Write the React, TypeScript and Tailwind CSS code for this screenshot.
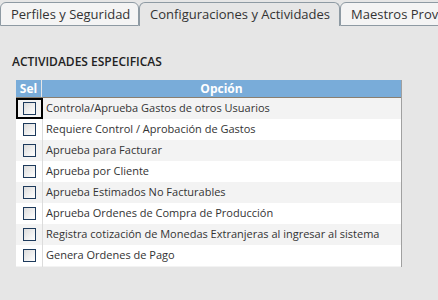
import React, { useState } from "react";

const opciones = [
  "Controla/Aprueba Gastos de otros Usuarios",
  "Requiere Control / Aprobación de Gastos",
  "Aprueba para Facturar",
  "Aprueba por Cliente",
  "Aprueba Estimados No Facturables",
  "Aprueba Ordenes de Compra de Producción",
  "Registra cotización de Monedas Extranjeras al ingresar al sistema",
  "Genera Ordenes de Pago",
  "Aprueba Ordenes de Pago",
];

const tabs = [
  { label: "Perfiles y Seguridad", w: "w-[139px]" },
  { label: "Configuraciones y Actividades", w: "w-[201px]" },
  { label: "Maestros Provisorios", w: "w-[150px]" },
];

export default function App() {
  const [active] = useState(1);
  const [checked, setChecked] = useState<boolean[]>(opciones.map(() => false));

  return (
    <div className="h-[300px] w-[438px] overflow-hidden bg-[#e6e6e6] font-['Open_Sans',sans-serif] text-[#333]">
      {/* Tabs */}
      <div className="flex pt-[2px]">
        {tabs.map((t, i) => (
          <div
            key={t.label}
            className={
              "h-[24px] shrink-0 rounded-t-[6px] border border-[#8e9aa3] pl-[10px] text-[13px] leading-[22px] whitespace-nowrap " +
              t.w +
              (i === active ? " border-b-0 bg-[#e6e6e6]" : " bg-[#f4f4f4]")
            }
          >
            {t.label}
          </div>
        ))}
      </div>

      <div className="pl-[12px] pt-[28px] text-[12px] font-semibold leading-[16px] text-[#222]">
        ACTIVIDADES ESPECIFICAS
      </div>

      {/* Table */}
      <div className="ml-[16px] mt-[10px] h-[187px] w-[386px] overflow-hidden border-r border-[#a0a0a0]">
        <div className="flex h-[18px] border-b border-[#8a7f70] bg-[#79acd9] text-[12px] font-bold leading-[17px] text-white">
          <div className="w-[26px] border-r border-[#e6e6e6] text-center">Sel</div>
          <div className="flex-1 text-center">Opción</div>
        </div>
        {opciones.map((op, i) => (
          <div
            key={op}
            className={"flex h-[21px] items-center " + (i % 2 === 0 ? "bg-[#f3f3f3]" : "bg-white")}
          >
            <div
              className={
                "flex h-full w-[27px] items-center justify-center border-r border-[#dcdcdc] " +
                (i === 0 ? "outline-2 -outline-offset-2 outline-black" : "")
              }
            >
              <button
                onClick={() => setChecked((c) => c.map((v, j) => (j === i ? !v : v)))}
                className="h-[13px] w-[13px] border border-[#1d3a5c] bg-gradient-to-br from-[#dcdcdc] to-white"
              >
                {checked[i] && <span className="block text-[10px] leading-[11px]">✓</span>}
              </button>
            </div>
            <div className="pl-[3px] text-[11px] whitespace-nowrap">{op}</div>
          </div>
        ))}
      </div>
    </div>
  );
}
